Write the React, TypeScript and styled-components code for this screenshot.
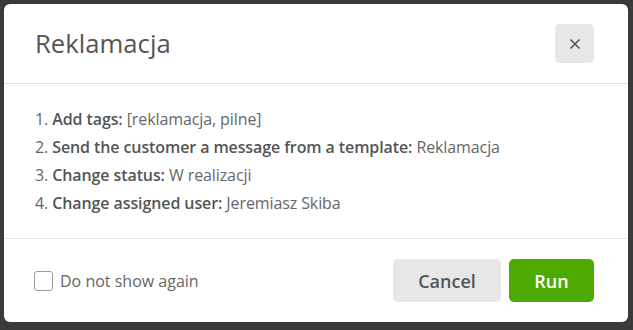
import React from "react";
import styled, { createGlobalStyle } from "styled-components";

const Global = createGlobalStyle`
  html, body { margin: 0; padding: 0; background: #3a3a3a; }
  body { font-family: "Open Sans", "Noto Sans", sans-serif; }
  * { box-sizing: border-box; }
`;

const Backdrop = styled.div`
  width: 633px;
  height: 330px;
  padding: 4px 5px 8px 4px;
  background: #3a3a3a;
`;

const Modal = styled.div`
  width: 624px;
  height: 318px;
  background: #fff;
  border-radius: 6px;
  display: flex;
  flex-direction: column;
  overflow: hidden;
`;

const Header = styled.div`
  display: flex;
  align-items: center;
  justify-content: space-between;
  height: 80px;
  padding: 0 34px 0 31px;
  border-bottom: 1px solid #e2e2e2;
`;

const Title = styled.h2`
  margin: 0;
  font-size: 25.7px;
  font-weight: 400;
  color: #555;
`;

const CloseButton = styled.button`
  width: 39px;
  height: 39px;
  border: none;
  border-radius: 5px;
  background: #e7e7e7;
  display: flex;
  align-items: center;
  justify-content: center;
  padding: 0;
  cursor: pointer;
`;

const Body = styled.ol`
  margin: 0;
  padding: 21px 31px;
  list-style: none;
  border-bottom: 1px solid #e2e2e2;
`;

const Item = styled.li`
  font-size: 16px;
  line-height: 28px;
  color: #666;
  letter-spacing: -0.1px;
`;

const Label = styled.span`
  font-weight: 600;
  color: #555;
`;

const Footer = styled.div`
  flex: 1;
  display: flex;
  align-items: center;
  justify-content: space-between;
  padding: 0 34px 0 30px;
`;

const CheckLabel = styled.label`
  display: flex;
  align-items: center;
  gap: 7px;
  font-size: 16px;
  color: #666;
`;

const Box = styled.span`
  width: 19px;
  height: 20px;
  border: 1px solid #9a9a9a;
  border-radius: 3px;
  background: #fff;
`;

const Actions = styled.div`
  display: flex;
  gap: 8px;
`;

const Btn = styled.button<{ $primary?: boolean; $w: number }>`
  width: ${(p) => p.$w}px;
  height: 43px;
  border: none;
  border-radius: 5px;
  font-family: inherit;
  font-size: 18px;
  font-weight: 600;
  background: ${(p) => (p.$primary ? "#4caa00" : "#e7e7e7")};
  color: ${(p) => (p.$primary ? "#fff" : "#555")};
  cursor: pointer;
`;

const items: [string, string][] = [
  ["Add tags", "[reklamacja, pilne]"],
  ["Send the customer a message from a template", "Reklamacja"],
  ["Change status", "W realizacji"],
  ["Change assigned user", "Jeremiasz Skiba"],
];

export default function App() {
  return (
    <>
      <Global />
      <Backdrop>
        <Modal>
          <Header>
            <Title>Reklamacja</Title>
            <CloseButton aria-label="Close">
              <svg width="12" height="12" viewBox="0 0 12 12">
                <path d="M1.5 1.5 L10.5 10.5 M10.5 1.5 L1.5 10.5" stroke="#555" strokeWidth="1.6" />
              </svg>
            </CloseButton>
          </Header>
          <Body>
            {items.map(([l, v], i) => (
              <Item key={i}>
                {i + 1}. <Label>{l}:</Label> {v}
              </Item>
            ))}
          </Body>
          <Footer>
            <CheckLabel>
              <Box />
              Do not show again
            </CheckLabel>
            <Actions>
              <Btn $w={108}>Cancel</Btn>
              <Btn $w={85} $primary>Run</Btn>
            </Actions>
          </Footer>
        </Modal>
      </Backdrop>
    </>
  );
}
